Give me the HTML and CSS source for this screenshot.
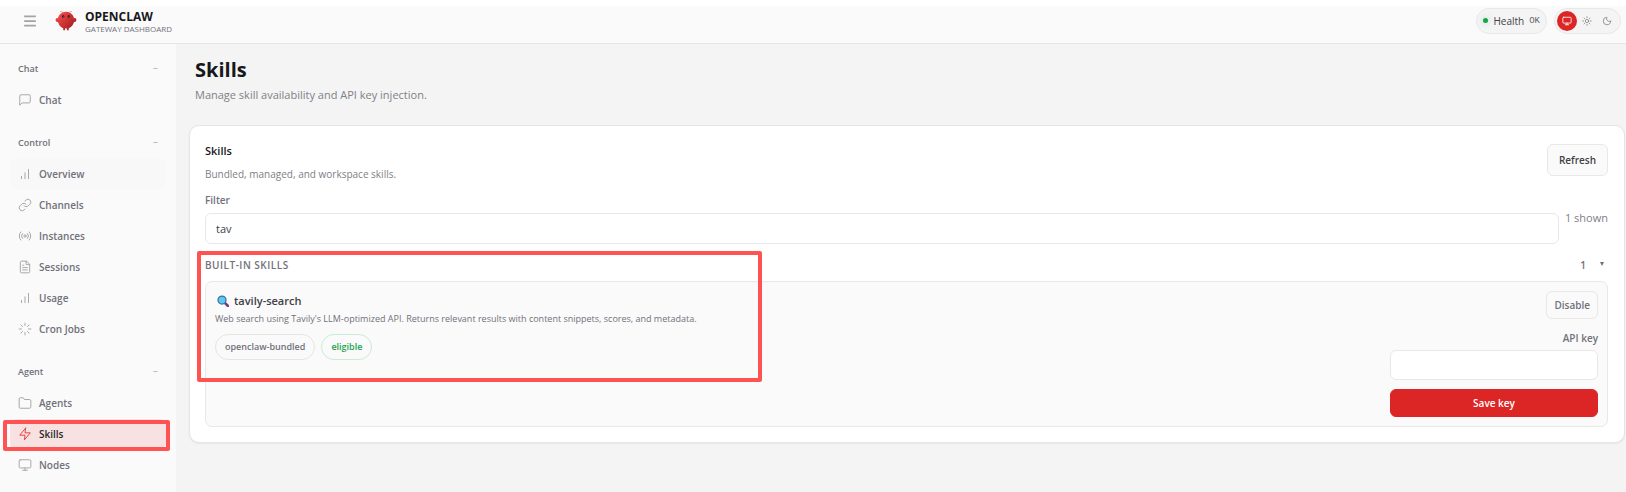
FILE: index.html
```html
<!DOCTYPE html>
<html lang="en">
<head>
<meta charset="utf-8">
<title>OpenClaw – Skills</title>
<link rel="stylesheet" href="styles.css">
</head>
<body>
<svg class="defs" aria-hidden="true">
  <symbol id="i-chat" viewBox="0 0 24 24"><path d="M21 15a2 2 0 0 1-2 2H7l-4 4V5a2 2 0 0 1 2-2h14a2 2 0 0 1 2 2z"/></symbol>
  <symbol id="i-bars" viewBox="0 0 24 24"><path d="M6 20v-4M12 20V10M18 20V4"/></symbol>
  <symbol id="i-link" viewBox="0 0 24 24"><path d="M10 13a5 5 0 0 0 7.54.54l3-3a5 5 0 0 0-7.07-7.07l-1.72 1.71"/><path d="M14 11a5 5 0 0 0-7.54-.54l-3 3a5 5 0 0 0 7.07 7.07l1.71-1.71"/></symbol>
  <symbol id="i-radio" viewBox="0 0 24 24"><circle cx="12" cy="12" r="2"/><path d="M16.24 7.76a6 6 0 0 1 0 8.49M7.76 16.24a6 6 0 0 1 0-8.49M19.07 4.93a10 10 0 0 1 0 14.14M4.93 19.07a10 10 0 0 1 0-14.14"/></symbol>
  <symbol id="i-file" viewBox="0 0 24 24"><path d="M14 2H6a2 2 0 0 0-2 2v16a2 2 0 0 0 2 2h12a2 2 0 0 0 2-2V8z"/><path d="M14 2v6h6M16 13H8M16 17H8M10 9H8"/></symbol>
  <symbol id="i-loader" viewBox="0 0 24 24"><path d="M12 2v4M12 18v4M4.93 4.93l2.83 2.83M16.24 16.24l2.83 2.83M2 12h4M18 12h4M4.93 19.07l2.83-2.83M16.24 7.76l2.83-2.83"/></symbol>
  <symbol id="i-folder" viewBox="0 0 24 24"><path d="M22 19a2 2 0 0 1-2 2H4a2 2 0 0 1-2-2V5a2 2 0 0 1 2-2h5l2 3h9a2 2 0 0 1 2 2z"/></symbol>
  <symbol id="i-zap" viewBox="0 0 24 24"><path d="M13 2 3 14h9l-1 8 10-12h-9l1-8z"/></symbol>
  <symbol id="i-monitor" viewBox="0 0 24 24"><rect x="2" y="3" width="20" height="14" rx="2"/><path d="M8 21h8M12 17v4"/></symbol>
  <symbol id="i-sun" viewBox="0 0 24 24"><circle cx="12" cy="12" r="4"/><path d="M12 2v2M12 20v2M4.93 4.93l1.41 1.41M17.66 17.66l1.41 1.41M2 12h2M20 12h2M6.34 17.66l-1.41 1.41M19.07 4.93l-1.41 1.41"/></symbol>
  <symbol id="i-moon" viewBox="0 0 24 24"><path d="M20.985 12.486a9 9 0 1 1-9.473-9.472c.405-.022.617.46.402.803a6 6 0 0 0 8.268 8.268c.344-.215.825-.004.803.401"/></symbol>
  <symbol id="i-menu" viewBox="0 0 24 24"><path d="M2 4h20M2 12h20M2 20h20"/></symbol>
</svg>

<header class="topbar">
  <button class="menu-button" type="button" aria-label="Toggle navigation"><svg class="icon"><use href="#i-menu"/></svg></button>
  <svg class="logo" viewBox="0 0 120 120" aria-hidden="true">
    <defs><linearGradient id="claw" x1="0" y1="0" x2="1" y2="1"><stop offset="0" stop-color="#ff4d4d"/><stop offset="1" stop-color="#991b1b"/></linearGradient></defs>
    <path d="M60 10C30 10 15 35 15 55s15 40 30 45v10h10v-10s5 2 10 0v10h10v-10c15-5 30-25 30-45S90 10 60 10Z" fill="url(#claw)"/>
    <path d="M20 45C5 40 0 50 5 60s15 5 20-5c3-7 0-10-5-10ZM100 45c15-5 20 5 15 15s-15 5-20-5c-3-7 0-10 5-10Z" fill="url(#claw)"/>
    <path d="M45 15Q35 5 30 8M75 15Q85 5 90 8" fill="none" stroke="#ff4d4d" stroke-width="3" stroke-linecap="round"/>
    <circle cx="45" cy="35" r="6" fill="#050810"/><circle cx="75" cy="35" r="6" fill="#050810"/>
    <circle cx="46" cy="34" r="2.5" fill="#00e5cc"/><circle cx="76" cy="34" r="2.5" fill="#00e5cc"/>
  </svg>
  <div class="brand">
    <div class="brand-title">OPENCLAW</div>
    <div class="brand-sub">GATEWAY DASHBOARD</div>
  </div>
  <div class="status">
    <div class="health"><span class="dot"></span><span>Health</span><span class="mono">OK</span></div>
    <div class="themes">
      <button class="theme is-active" type="button" aria-label="System theme"><svg class="icon"><use href="#i-monitor"/></svg></button>
      <button class="theme" type="button" aria-label="Light theme"><svg class="icon"><use href="#i-sun"/></svg></button>
      <button class="theme" type="button" aria-label="Dark theme"><svg class="icon"><use href="#i-moon"/></svg></button>
    </div>
  </div>
</header>

<div class="shell">
  <nav class="sidebar">
    <div class="group">
      <button class="group-label" type="button"><span>Chat</span><span class="dash">−</span></button>
      <a class="item" href="#chat"><svg class="icon"><use href="#i-chat"/></svg>Chat</a>
    </div>
    <div class="group">
      <button class="group-label" type="button"><span>Control</span><span class="dash">−</span></button>
      <a class="item is-hover" href="#overview"><svg class="icon"><use href="#i-bars"/></svg>Overview</a>
      <a class="item" href="#channels"><svg class="icon"><use href="#i-link"/></svg>Channels</a>
      <a class="item" href="#instances"><svg class="icon"><use href="#i-radio"/></svg>Instances</a>
      <a class="item" href="#sessions"><svg class="icon"><use href="#i-file"/></svg>Sessions</a>
      <a class="item" href="#usage"><svg class="icon"><use href="#i-bars"/></svg>Usage</a>
      <a class="item" href="#cron"><svg class="icon"><use href="#i-loader"/></svg>Cron Jobs</a>
    </div>
    <div class="group">
      <button class="group-label" type="button"><span>Agent</span><span class="dash">−</span></button>
      <a class="item" href="#agents"><svg class="icon"><use href="#i-folder"/></svg>Agents</a>
      <a class="item is-current" href="#skills"><svg class="icon"><use href="#i-zap"/></svg>Skills<span class="mark mark-nav"></span></a>
      <a class="item" href="#nodes"><svg class="icon"><use href="#i-monitor"/></svg>Nodes</a>
    </div>
  </nav>

  <main class="content">
    <div class="page-head">
      <h1>Skills</h1>
      <p>Manage skill availability and API key injection.</p>
    </div>

    <section class="card">
      <div class="card-head">
        <div>
          <h2>Skills</h2>
          <p>Bundled, managed, and workspace skills.</p>
        </div>
        <button class="button" type="button">Refresh</button>
      </div>

      <div class="filters">
        <div class="field">
          <label for="filter">Filter</label>
          <input id="filter" type="text" value="tav">
        </div>
        <div class="shown">1 shown</div>
      </div>

      <div class="skills">
        <div class="skills-head"><h3>BUILT-IN SKILLS</h3><span class="count">1</span><span class="arrow"></span></div>
        <article class="skill">
          <div class="skill-main">
            <h4><svg class="glass" viewBox="0 0 24 24" aria-hidden="true"><path d="m15 15 7 7" stroke="#7a3b7f" stroke-width="5" stroke-linecap="round"/><circle cx="10" cy="10" r="8" fill="#5bc9f0" stroke="#3d6fa3" stroke-width="2.5"/></svg>tavily-search</h4>
            <p>Web search using Tavily's LLM-optimized API. Returns relevant results with content snippets, scores, and metadata.</p>
            <div class="chips"><span class="chip">openclaw-bundled</span><span class="chip chip-ok">eligible</span></div>
          </div>
          <form class="skill-side">
            <button class="button button-small" type="button">Disable</button>
            <label for="api-key">API key</label>
            <input id="api-key" type="password">
            <button class="button button-primary" type="button">Save key</button>
          </form>
        </article>
        <span class="mark mark-skill"></span>
      </div>
    </section>
  </main>
</div>
</body>
</html>
```
FILE: styles.css
```css
* { box-sizing: border-box; }

body {
  margin: 0;
  min-height: 100vh;
  display: flex;
  flex-direction: column;
  background: #f4f4f4;
  color: #3f3f46;
  font: 400 11px/16px "Open Sans", "Noto Sans", sans-serif;
}

h1, h2, h3, h4, p { margin: 0; }
button, input { font: inherit; color: inherit; }
button { cursor: pointer; }

.defs { position: absolute; width: 0; height: 0; }

.icon {
  width: 14px;
  height: 14px;
  flex: none;
  fill: none;
  stroke: currentColor;
  stroke-width: 1.6;
  stroke-linecap: round;
  stroke-linejoin: round;
}

/* Top bar */
.topbar {
  display: flex;
  align-items: center;
  height: 44px;
  padding: 0 5px 8px 21px;
  border-top: 6px solid #fff;
  border-bottom: 1px solid #e5e5e5;
  background: #fafafa;
}
.menu-button {
  display: flex;
  padding: 2px;
  border: 0;
  background: none;
  color: #a3a3a7;
}
.menu-button .icon { stroke-width: 3; stroke-linecap: butt; }
.logo { width: 22px; height: 22px; margin: 0 8px 0 16px; }
.brand { padding-top: 4px; }
.brand-title { color: #18181b; font-size: 12px; line-height: 13px; font-weight: 700; }
.brand-sub { color: #71717a; font-size: 8px; line-height: 12px; font-weight: 500; }

.status { display: flex; gap: 7px; margin-left: auto; }
.health {
  display: flex;
  align-items: center;
  gap: 5px;
  height: 26px;
  padding: 0 6px;
  border: 1px solid #e8e8e8;
  border-radius: 13px;
  background: #f4f4f4;
  font-size: 10px;
}
.dot {
  width: 5px;
  height: 5px;
  border-radius: 50%;
  background: #16a34a;
  box-shadow: 0 0 6px rgba(22, 163, 74, .35);
}
.mono { color: #62626a; font: 9px "Liberation Mono", monospace; }
.themes {
  display: flex;
  align-items: center;
  height: 26px;
  padding: 0 3px 0 2px;
  border: 1px solid #e8e8e8;
  border-radius: 13px;
  background: #f4f4f4;
}
.theme {
  display: grid;
  place-items: center;
  width: 20px;
  height: 20px;
  padding: 0;
  border: 0;
  border-radius: 50%;
  background: none;
  color: #85858c;
}
.theme .icon { width: 10px; height: 10px; stroke-width: 2; }
.theme.is-active { background: #dc2626; color: #fff; }

/* Layout */
.shell { display: flex; flex: 1; }
.sidebar {
  display: flex;
  flex-direction: column;
  gap: 13px;
  width: 176px;
  flex: none;
  padding: 10px;
  background: #fafafa;
}
.group { display: grid; gap: 1px; }
.group-label {
  display: flex;
  align-items: center;
  justify-content: space-between;
  height: 30px;
  padding: 0 8px;
  border: 0;
  background: none;
  color: #71717a;
  font-size: 9px;
  font-weight: 600;
}
.dash { color: #b4b4b8; }
.item {
  position: relative;
  display: flex;
  align-items: center;
  gap: 7px;
  height: 30px;
  padding: 0 8px;
  border-radius: 6px;
  color: #71717a;
  font-size: 10px;
  font-weight: 600;
  text-decoration: none;
}
.item .icon { color: #a3a3a8; }
.is-hover { background: #f8f8f8; }
.is-current { background: #f8e1e1; color: #27272a; }
.item.is-current .icon { color: #e23b3b; }

/* Highlight frames */
.mark {
  position: absolute;
  border: 4px solid #ff5252;
  border-radius: 2px;
  pointer-events: none;
}
.mark-nav { inset: 1px -4px -2px -7px; }
.mark-skill { top: -6px; left: -8px; width: 565px; height: 131px; }

/* Page */
.content { flex: 1; min-width: 0; padding: 14px 1px 16px 13px; }
.page-head { padding: 0 6px; margin-bottom: 22px; }
h1 { color: #18181b; font-size: 20px; line-height: 24px; font-weight: 700; }
.page-head p { margin-top: 4px; color: #808086; line-height: 17px; }

.card {
  padding: 18px 16px 15px 15px;
  border: 1px solid #e5e5e5;
  border-radius: 10px;
  background: #fff;
  box-shadow: 0 1px 2px rgba(0, 0, 0, .06);
}
.card-head { display: flex; justify-content: space-between; align-items: flex-start; }
h2 { color: #18181b; font-size: 11px; line-height: 14px; font-weight: 600; }
.card-head p { margin-top: 8px; color: #808086; font-size: 10px; line-height: 16px; }

.button {
  height: 32px;
  padding: 0 11px;
  border: 1px solid #e8e8e8;
  border-radius: 6px;
  background: #fafafa;
  font-size: 10px;
  font-weight: 600;
}
.button-small { height: 28px; padding: 0 7px; color: #71717a; }
.button-primary { width: 100%; height: 28px; border-color: #dc2626; background: #dc2626; color: #fff; }

label { color: #71717a; font-size: 10px; line-height: 16px; font-weight: 600; }
input {
  width: 100%;
  height: 31px;
  padding: 0 10px;
  border: 1px solid #e8e8e8;
  border-radius: 6px;
  background: #fff;
  outline: 0;
}
.filters { display: flex; align-items: center; gap: 6px; margin-top: 10px; }
.field { display: grid; gap: 5px; flex: 1; }
.shown { color: #808086; font-size: 11px; }

.skills { position: relative; margin-top: 13px; }
.skills-head { display: flex; align-items: center; height: 16px; color: #71717a; }
h3 { flex: 1; font-size: 10px; font-weight: 600; letter-spacing: 0.05em; }
.count { font-size: 10px; font-weight: 600; }
.arrow {
  margin: 0 4px 2px 14px;
  border: 2px solid transparent;
  border-top: 4px solid #71717a;
  border-bottom: 0;
}
.skill {
  display: flex;
  justify-content: space-between;
  gap: 16px;
  margin-top: 8px;
  padding: 9px;
  border: 1px solid #e8e8e8;
  border-radius: 7px;
  background: #fafafa;
}
h4 { display: flex; align-items: center; gap: 5px; font-size: 11px; line-height: 19px; font-weight: 600; }
.glass { width: 12px; height: 12px; margin-left: 2px; fill: none; }
.skill-main p { color: #71717a; font-size: 9px; line-height: 17px; }
.chips { display: flex; gap: 6px; margin-top: 7px; }
.chip {
  padding: 4px 9px;
  border: 1px solid #e5e5e5;
  border-radius: 13px;
  color: #71717a;
  font-size: 9px;
  font-weight: 600;
}
.chip-ok { border-color: #c9ecd5; color: #23a252; }
.skill-side { display: flex; flex-direction: column; align-items: flex-end; width: 208px; }
.skill-side label { margin: 11px 0 4px; }
.skill-side input { height: 30px; margin-bottom: 9px; }
```
